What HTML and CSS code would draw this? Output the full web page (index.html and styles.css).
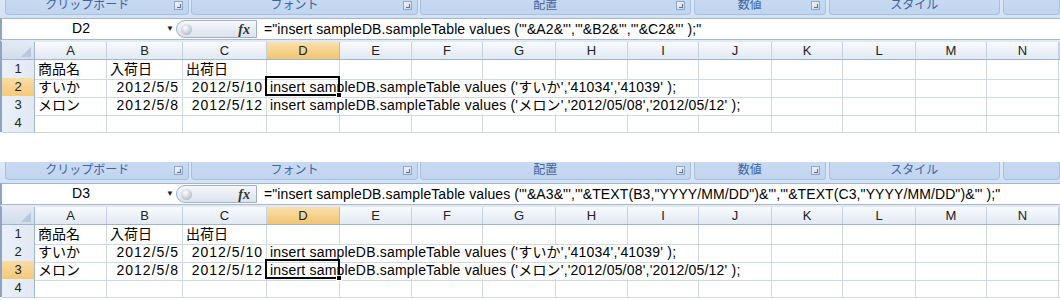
FILE: index.html
```html
<!DOCTYPE html>
<html lang="ja">
<head>
    <meta charset="UTF-8">
    <title>sampleTable insert</title>
    <link rel="stylesheet" href="styles.css">
</head>
<body>
    <!-- 1枚目: D2 を選択 -->
    <div class="sheet first">
        <div class="ribbon">
            <div class="group g-clip launch">クリップボード<i class="launcher"></i></div>
            <div class="group g-font launch">フォント<i class="launcher"></i></div>
            <div class="group g-align launch">配置<i class="launcher"></i></div>
            <div class="group g-num launch">数値<i class="launcher"></i></div>
            <div class="group g-style">スタイル</div>
            <div class="group g-more"></div>
        </div>
        <div class="formula-bar">
            <div class="name-box"><span class="ref">D2</span><span class="drop">&#9660;</span></div>
            <div class="fx-box"><i class="knob"></i><span class="fx">fx</span></div>
            <div class="formula">="insert sampleDB.sampleTable values ('"&amp;A2&amp;"','"&amp;B2&amp;"','"&amp;C2&amp;"' );"</div>
        </div>
        <div class="grid">
            <div class="row head">
                <div class="corner"></div>
                <div class="ch">A</div><div class="ch">B</div><div class="ch">C</div><div class="ch sel-col">D</div>
                <div class="ch">E</div><div class="ch">F</div><div class="ch">G</div><div class="ch">H</div>
                <div class="ch">I</div><div class="ch">J</div><div class="ch">K</div><div class="ch">L</div>
                <div class="ch">M</div><div class="ch">N</div><div class="ch"></div>
            </div>
            <div class="row">
                <div class="rh">1</div>
                <div class="c">商品名</div><div class="c">入荷日</div><div class="c">出荷日</div>
                <div class="c"></div><div class="c"></div><div class="c"></div><div class="c"></div><div class="c"></div>
                <div class="c"></div><div class="c"></div><div class="c"></div><div class="c"></div><div class="c"></div>
                <div class="c"></div><div class="c"></div>
            </div>
            <div class="row">
                <div class="rh sel-row">2</div>
                <div class="c">すいか</div><div class="c num">2012/5/5</div><div class="c num">2012/5/10</div>
                <div class="c long span6">insert sampleDB.sampleTable values ('すいか','41034','41039' );<span class="sel"><i class="handle"></i></span></div>
                <div class="c"></div><div class="c"></div><div class="c"></div><div class="c"></div><div class="c"></div><div class="c"></div>
            </div>
            <div class="row">
                <div class="rh">3</div>
                <div class="c">メロン</div><div class="c num">2012/5/8</div><div class="c num">2012/5/12</div>
                <div class="c long span7">insert sampleDB.sampleTable values ('メロン','2012/05/08','2012/05/12' );</div>
                <div class="c"></div><div class="c"></div><div class="c"></div><div class="c"></div><div class="c"></div>
            </div>
            <div class="row">
                <div class="rh">4</div>
                <div class="c"></div><div class="c"></div><div class="c"></div><div class="c"></div><div class="c"></div>
                <div class="c"></div><div class="c"></div><div class="c"></div><div class="c"></div><div class="c"></div>
                <div class="c"></div><div class="c"></div><div class="c"></div><div class="c"></div><div class="c"></div>
            </div>
        </div>
    </div>

    <!-- 2枚目: D3 を選択 -->
    <div class="sheet second">
        <div class="ribbon">
            <div class="group g-clip launch">クリップボード<i class="launcher"></i></div>
            <div class="group g-font launch">フォント<i class="launcher"></i></div>
            <div class="group g-align launch">配置<i class="launcher"></i></div>
            <div class="group g-num launch">数値<i class="launcher"></i></div>
            <div class="group g-style">スタイル</div>
            <div class="group g-more"></div>
        </div>
        <div class="formula-bar">
            <div class="name-box"><span class="ref">D3</span><span class="drop">&#9660;</span></div>
            <div class="fx-box"><i class="knob"></i><span class="fx">fx</span></div>
            <div class="formula">="insert sampleDB.sampleTable values ('"&amp;A3&amp;"','"&amp;TEXT(B3,"YYYY/MM/DD")&amp;"','"&amp;TEXT(C3,"YYYY/MM/DD")&amp;"' );"</div>
        </div>
        <div class="grid">
            <div class="row head">
                <div class="corner"></div>
                <div class="ch">A</div><div class="ch">B</div><div class="ch">C</div><div class="ch sel-col">D</div>
                <div class="ch">E</div><div class="ch">F</div><div class="ch">G</div><div class="ch">H</div>
                <div class="ch">I</div><div class="ch">J</div><div class="ch">K</div><div class="ch">L</div>
                <div class="ch">M</div><div class="ch">N</div><div class="ch"></div>
            </div>
            <div class="row">
                <div class="rh">1</div>
                <div class="c">商品名</div><div class="c">入荷日</div><div class="c">出荷日</div>
                <div class="c"></div><div class="c"></div><div class="c"></div><div class="c"></div><div class="c"></div>
                <div class="c"></div><div class="c"></div><div class="c"></div><div class="c"></div><div class="c"></div>
                <div class="c"></div><div class="c"></div>
            </div>
            <div class="row">
                <div class="rh">2</div>
                <div class="c">すいか</div><div class="c num">2012/5/5</div><div class="c num">2012/5/10</div>
                <div class="c long span6">insert sampleDB.sampleTable values ('すいか','41034','41039' );</div>
                <div class="c"></div><div class="c"></div><div class="c"></div><div class="c"></div><div class="c"></div><div class="c"></div>
            </div>
            <div class="row">
                <div class="rh sel-row">3</div>
                <div class="c">メロン</div><div class="c num">2012/5/8</div><div class="c num">2012/5/12</div>
                <div class="c long span7">insert sampleDB.sampleTable values ('メロン','2012/05/08','2012/05/12' );<span class="sel"><i class="handle"></i></span></div>
                <div class="c"></div><div class="c"></div><div class="c"></div><div class="c"></div><div class="c"></div>
            </div>
            <div class="row">
                <div class="rh">4</div>
                <div class="c"></div><div class="c"></div><div class="c"></div><div class="c"></div><div class="c"></div>
                <div class="c"></div><div class="c"></div><div class="c"></div><div class="c"></div><div class="c"></div>
                <div class="c"></div><div class="c"></div><div class="c"></div><div class="c"></div><div class="c"></div>
            </div>
        </div>
    </div>
</body>
</html>
```

FILE: styles.css
```css
* {
    margin: 0;
    padding: 0;
    box-sizing: border-box;
}

body {
    background-color: #fff;
    font-family: "Liberation Sans", "Noto Sans CJK JP", sans-serif;
    font-size: 13px;
    color: #000;
    overflow: hidden;
}

.sheet {
    height: 136px;
}

.sheet.first {
    margin-top: -3px;
}

.sheet.second {
    margin-top: 29px;
}

/* リボンのグループ名の帯 */
.ribbon {
    height: 21px;
    display: flex;
    gap: 2px;
    padding-left: 5px;
    background: linear-gradient(#dde9f7, #d3e1f3);
}

.group {
    position: relative;
    height: 18px;
    border: 1px solid #a7c0e0;
    border-top: none;
    border-radius: 0 0 4px 4px;
    background: linear-gradient(#c8daf1, #c0d5ef);
    color: #3f64a2;
    font-size: 12px;
    line-height: 16px;
    text-align: center;
}

.launch {
    padding-right: 20px;
}

.g-clip { width: 192px; }
.g-font { width: 236px; }
.g-align { width: 283px; }
.g-num { width: 137px; margin-left: 1px; }
.g-style { width: 179px; margin-left: 1px; }
.g-more { width: 60px; margin-left: 1px; }

.launcher {
    position: absolute;
    right: 5px;
    top: 4px;
    width: 9px;
    height: 9px;
    border: 1px solid #8fa6c4;
    background: linear-gradient(135deg, #f4f7fb, #c9d5e4);
}

.launcher::after {
    content: "";
    position: absolute;
    right: 1px;
    bottom: 1px;
    width: 3px;
    height: 3px;
    border-right: 1px solid #5d7597;
    border-bottom: 1px solid #5d7597;
}

/* 数式バー */
.formula-bar {
    height: 22px;
    display: flex;
    background-color: #fff;
    border-top: 1px solid #a3b6cf;
    border-bottom: 1px solid #a9bad0;
    border-left: 2px solid #8ea4c0;
}

.name-box {
    width: 174px;
    position: relative;
    text-align: center;
    font-size: 14px;
    line-height: 19px;
}

.name-box .ref {
    display: inline-block;
    margin-left: -16px;
}

.drop {
    position: absolute;
    right: 2px;
    top: 0;
    font-size: 8px;
    color: #222;
}

.fx-box {
    position: relative;
    width: 81px;
    margin: 1px 0;
    border: 1px solid #9fb0c6;
    border-radius: 10px 0 0 10px;
    background: linear-gradient(#f5f8fb, #dbe3ed);
}

.knob {
    position: absolute;
    left: 4px;
    top: 3px;
    width: 11px;
    height: 11px;
    border-radius: 50%;
    background: radial-gradient(circle at 40% 35%, #fff, #b9c2cd 70%, #9aa5b3);
}

.fx {
    position: absolute;
    right: 6px;
    top: 0;
    font-family: "Liberation Serif", serif;
    font-style: italic;
    font-weight: bold;
    font-size: 14px;
    line-height: 18px;
    color: #333;
}

.formula {
    flex: 1;
    padding-left: 7px;
    font-size: 14px;
    line-height: 20px;
    letter-spacing: 0.1px;
    white-space: nowrap;
    overflow: hidden;
}

/* シート */
.grid {
    border-top: 2px solid #e1e9f4;
    border-left: 2px solid #8ea4c0;
}

.row {
    display: grid;
    grid-template-columns: 33px 72px 76px 84px 73px 72px 71px 73px 72px 71px 73px 71px 73px 71px 72px 1fr;
    height: 18px;
}

.row.head {
    border-bottom: 1px solid #9eb6ce;
    background: linear-gradient(#f8fafd, #e2e9f2);
}

.corner {
    position: relative;
    background: linear-gradient(#e2e9f3, #d2ddea);
    border-right: 1px solid #9eb6ce;
}

.corner::after {
    content: "";
    position: absolute;
    right: 3px;
    bottom: 2px;
    border-left: 10px solid transparent;
    border-bottom: 10px solid #b7c8dd;
}

.ch {
    border-right: 1px solid #c5d2e3;
    text-align: center;
    color: #222;
    font-size: 13px;
    line-height: 17px;
}

.ch.sel-col {
    background: linear-gradient(#fae0ae, #f2c570);
    border-right-color: #e8b45c;
}

.rh {
    background: linear-gradient(to right, #eaf0f7, #e2e9f3);
    border-right: 1px solid #9eb6ce;
    border-bottom: 1px solid #c5d2e3;
    text-align: center;
    color: #222;
    line-height: 18px;
}

.rh.sel-row {
    background: linear-gradient(#f9dca4, #f4c878);
    border-bottom-color: #e8b45c;
}

.c {
    border-right: 1px solid #d0d7e5;
    border-bottom: 1px solid #d0d7e5;
    padding: 0 3px;
    line-height: 19px;
    white-space: nowrap;
    font-size: 14px;
}

.c.num {
    text-align: right;
    letter-spacing: 1px;
}

.c.long {
    position: relative;
    letter-spacing: 0.2px;
}

.span6 { grid-column: span 6; }
.span7 { grid-column: span 7; }

/* 選択セル */
.sel {
    position: absolute;
    left: -2px;
    top: -2px;
    width: 75px;
    height: 20px;
    border: 2px solid #000;
}

.handle {
    position: absolute;
    right: -4px;
    bottom: -4px;
    width: 6px;
    height: 6px;
    background-color: #000;
    border: 1px solid #fff;
}
```
